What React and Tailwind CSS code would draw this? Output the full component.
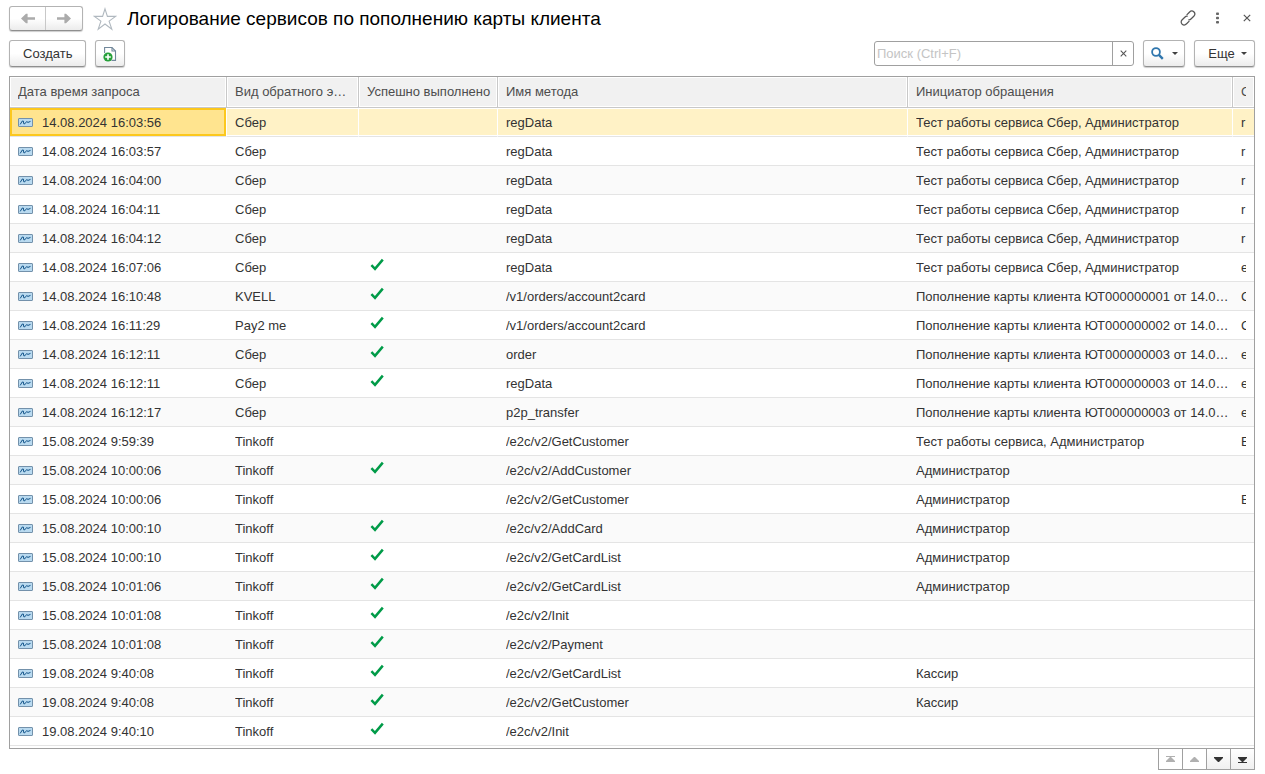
import React, { useState } from 'react';
import clsx from 'clsx';

const TEST_SBER = 'Тест работы сервиса Сбер, Администратор';
const TOPUP_1 = 'Пополнение карты клиента ЮТ000000001 от 14.08.2024';
const TOPUP_2 = 'Пополнение карты клиента ЮТ000000002 от 14.08.2024';
const TOPUP_3 = 'Пополнение карты клиента ЮТ000000003 от 14.08.2024';

const rows = [
  { date: '14.08.2024 16:03:56', kind: 'Сбер', ok: false, method: 'regData', initiator: TEST_SBER, answer: 'r' },
  { date: '14.08.2024 16:03:57', kind: 'Сбер', ok: false, method: 'regData', initiator: TEST_SBER, answer: 'r' },
  { date: '14.08.2024 16:04:00', kind: 'Сбер', ok: false, method: 'regData', initiator: TEST_SBER, answer: 'r' },
  { date: '14.08.2024 16:04:11', kind: 'Сбер', ok: false, method: 'regData', initiator: TEST_SBER, answer: 'r' },
  { date: '14.08.2024 16:04:12', kind: 'Сбер', ok: false, method: 'regData', initiator: TEST_SBER, answer: 'r' },
  { date: '14.08.2024 16:07:06', kind: 'Сбер', ok: true, method: 'regData', initiator: TEST_SBER, answer: 'e' },
  { date: '14.08.2024 16:10:48', kind: 'KVELL', ok: true, method: '/v1/orders/account2card', initiator: TOPUP_1, answer: 'C' },
  { date: '14.08.2024 16:11:29', kind: 'Pay2 me', ok: true, method: '/v1/orders/account2card', initiator: TOPUP_2, answer: 'C' },
  { date: '14.08.2024 16:12:11', kind: 'Сбер', ok: true, method: 'order', initiator: TOPUP_3, answer: 'e' },
  { date: '14.08.2024 16:12:11', kind: 'Сбер', ok: true, method: 'regData', initiator: TOPUP_3, answer: 'e' },
  { date: '14.08.2024 16:12:17', kind: 'Сбер', ok: false, method: 'p2p_transfer', initiator: TOPUP_3, answer: 'e' },
  { date: '15.08.2024 9:59:39', kind: 'Tinkoff', ok: false, method: '/e2c/v2/GetCustomer', initiator: 'Тест работы сервиса, Администратор', answer: 'E' },
  { date: '15.08.2024 10:00:06', kind: 'Tinkoff', ok: true, method: '/e2c/v2/AddCustomer', initiator: 'Администратор', answer: '' },
  { date: '15.08.2024 10:00:06', kind: 'Tinkoff', ok: false, method: '/e2c/v2/GetCustomer', initiator: 'Администратор', answer: 'E' },
  { date: '15.08.2024 10:00:10', kind: 'Tinkoff', ok: true, method: '/e2c/v2/AddCard', initiator: 'Администратор', answer: '' },
  { date: '15.08.2024 10:00:10', kind: 'Tinkoff', ok: true, method: '/e2c/v2/GetCardList', initiator: 'Администратор', answer: '' },
  { date: '15.08.2024 10:01:06', kind: 'Tinkoff', ok: true, method: '/e2c/v2/GetCardList', initiator: 'Администратор', answer: '' },
  { date: '15.08.2024 10:01:08', kind: 'Tinkoff', ok: true, method: '/e2c/v2/Init', initiator: '', answer: '' },
  { date: '15.08.2024 10:01:08', kind: 'Tinkoff', ok: true, method: '/e2c/v2/Payment', initiator: '', answer: '' },
  { date: '19.08.2024 9:40:08', kind: 'Tinkoff', ok: true, method: '/e2c/v2/GetCardList', initiator: 'Кассир', answer: '' },
  { date: '19.08.2024 9:40:08', kind: 'Tinkoff', ok: true, method: '/e2c/v2/GetCustomer', initiator: 'Кассир', answer: '' },
  { date: '19.08.2024 9:40:10', kind: 'Tinkoff', ok: true, method: '/e2c/v2/Init', initiator: '', answer: '' },
];

const columns = [
  { title: 'Дата время запроса', size: 'w-[217px] pr-2' },
  { title: 'Вид обратного эквайринга', size: 'w-[132px] pr-2' },
  { title: 'Успешно выполнено', size: 'w-[139px] pr-1' },
  { title: 'Имя метода', size: 'pr-2' },
  { title: 'Инициатор обращения', size: 'w-[325px] pr-2' },
  { title: 'С', size: 'w-[21px] pr-2', clip: true },
];

const raised =
  'flex items-center justify-center rounded-[3px] border border-[#b3b3b3] border-b-[#8f8f8f] bg-linear-to-b from-white from-50% to-[#ececec] shadow-[0_1px_1px_rgba(0,0,0,0.2)]';

const ArrowIcon = ({ flip }) => (
  <svg width="14" height="11" viewBox="0 0 14 11" className={clsx(flip && 'rotate-180')} aria-hidden="true">
    <path d="M0 5.5 L5 0.8 H6.6 V4.2 H14 V6.8 H6.6 V10.2 H5 Z" fill="#ababab" />
  </svg>
);

const StarIcon = () => (
  <svg width="24" height="24" viewBox="0 0 24 24" aria-hidden="true">
    <path
      d="M12 1.8 L14.4 9.4 H22.6 L16.1 14.1 L18.8 22.2 L12 17 L5.2 22.2 L7.9 14.1 L1.4 9.4 H9.6 Z"
      fill="#fff"
      stroke="#b0b8bf"
      strokeWidth="1.1"
    />
  </svg>
);

const CopyDocIcon = () => (
  <svg width="14" height="16" viewBox="0 0 14 16" aria-hidden="true">
    <path d="M1.6 7 V1.5 H9 L12.5 5 V14.4 H8.5" fill="#fff" stroke="#71879a" strokeWidth="1.1" />
    <path d="M9 1.5 V5 H12.5" fill="none" stroke="#71879a" strokeWidth="1.1" />
    <circle cx="5" cy="11" r="4.6" fill="#26a03a" />
    <path d="M5 8.2 V13.8 M2.2 11 H7.8" stroke="#fff" strokeWidth="1.6" />
  </svg>
);

const LinkIcon = () => (
  <svg width="16" height="16" viewBox="0 0 16 16" fill="none" stroke="#555" strokeWidth="1.25" strokeLinecap="round" aria-hidden="true">
    <path d="M7 4.6 L9.4 2.2 C10.8 0.8 12.4 0.6 13.8 1.8 C15.2 3.2 15.2 4.8 13.8 6.2 L11.2 8.8 C10.4 9.6 9.6 9.9 8.8 9.8" />
    <path d="M9 11.4 L6.6 13.8 C5.2 15.2 3.6 15.4 2.2 14.2 C0.8 12.8 0.8 11.2 2.2 9.8 L4.8 7.2 C5.6 6.4 6.4 6.1 7.2 6.2" />
  </svg>
);

const DotsIcon = () => (
  <svg width="3" height="12" viewBox="0 0 3 12" fill="#666" aria-hidden="true">
    <rect y="0.5" width="3" height="2.6" rx="0.8" />
    <rect y="4.7" width="3" height="2.6" rx="0.8" />
    <rect y="8.9" width="3" height="2.6" rx="0.8" />
  </svg>
);

const CrossIcon = ({ size = 8 }) => (
  <svg width={size} height={size} viewBox="0 0 8 8" aria-hidden="true">
    <path d="M0.8 0.8 L7.2 7.2 M7.2 0.8 L0.8 7.2" stroke="#555" strokeWidth="1.2" />
  </svg>
);

const SearchIcon = () => (
  <svg width="13" height="13" viewBox="0 0 13 13" fill="none" stroke="#2f76ad" aria-hidden="true">
    <circle cx="5" cy="5" r="3.9" strokeWidth="1.8" />
    <path d="M7.9 7.9 L11.8 11.8" strokeWidth="2.4" />
  </svg>
);

const CaretIcon = () => (
  <svg width="6" height="3" viewBox="0 0 6 3" aria-hidden="true">
    <path d="M0 0 H6 L3 3 Z" fill="#404040" />
  </svg>
);

const RecordIcon = () => (
  <svg width="15" height="9" viewBox="0 0 15 9" className="shrink-0" aria-hidden="true">
    <rect x="0.5" y="0.5" width="14" height="8" rx="0.5" fill="#b9daf0" stroke="#7391ab" />
    <path d="M2.2 6.4 L4.3 3 L5.3 3 L5.8 5.8 L6.8 5.8 L8.6 3.6 L10 4.4 L12.5 3.4" fill="none" stroke="#12548a" strokeWidth="1" />
  </svg>
);

const CheckIcon = () => (
  <svg width="14" height="13" viewBox="0 0 14 13" aria-hidden="true">
    <path d="M1.4 7.2 L5 10.8 L12.8 1.6" fill="none" stroke="#009b48" strokeWidth="2.5" />
  </svg>
);

const ScrollIcon = ({ down, edge }) => (
  <svg width="9" height="7" viewBox="0 0 9 7" fill="currentColor" className={clsx(down && 'rotate-180')} aria-hidden="true">
    {edge && <rect width="9" height="1" />}
    <path d="M4 1 H5 L9 5 V6 H0 V5 Z" />
  </svg>
);

const pager = [
  { label: 'В начало', edge: true, down: false, disabled: true },
  { label: 'Вверх', edge: false, down: false, disabled: true },
  { label: 'Вниз', edge: false, down: true, disabled: false },
  { label: 'В конец', edge: true, down: true, disabled: false },
];

const LogTable = () => {
  const [selected, setSelected] = useState(0);

  return (
    <div className="border border-[#a0a0a0] pb-0.5">
      <table className="w-full table-fixed border-separate border-spacing-0">
        <thead>
          <tr>
            {columns.map((col) => (
              <th
                key={col.title}
                className={clsx(
                  'h-[31px] border-r border-b border-[#c8c8c8] bg-[#f1f1f1] pl-2 text-left font-normal text-[#4d4d4d] shadow-[inset_0_0_0_1px_#fff] last:border-r-0',
                  col.size
                )}
              >
                <div className={col.clip ? 'overflow-hidden whitespace-nowrap' : 'truncate'}>{col.title}</div>
              </th>
            ))}
          </tr>
        </thead>
        <tbody>
          {rows.map((row, i) => {
            const active = i === selected;
            const base = 'h-[29px] border-b border-[#e4e4e4] pt-0.5 pl-2 pr-1';
            const stripe = i % 2 === 0 && 'bg-[#fafafa]';
            const cell = clsx(
              base,
              active
                ? 'border-r border-r-white bg-[#fff2c6] shadow-[inset_0_1px_0_#fff,inset_0_-1px_0_#fff] last:border-r-0'
                : stripe
            );
            const first = clsx(
              base,
              active ? 'border-r border-r-white bg-[#ffe48f] shadow-[inset_0_0_0_2px_#fcc81e]' : stripe
            );
            return (
              <tr key={i} onClick={() => setSelected(i)}>
                <td className={first}>
                  <div className="flex items-center gap-[9px] whitespace-nowrap">
                    <span className="pb-0.5">
                      <RecordIcon />
                    </span>
                    {row.date}
                  </div>
                </td>
                <td className={cell}>
                  <div className="truncate">{row.kind}</div>
                </td>
                <td className={cell}>
                  {row.ok && (
                    <div className="flex pb-2 pl-[3px]">
                      <CheckIcon />
                    </div>
                  )}
                </td>
                <td className={cell}>
                  <div className="truncate">{row.method}</div>
                </td>
                <td className={cell}>
                  <div className="truncate">{row.initiator}</div>
                </td>
                <td className={cell}>
                  <div className="mr-1 overflow-hidden">{row.answer}</div>
                </td>
              </tr>
            );
          })}
        </tbody>
      </table>
    </div>
  );
};

const App = () => {
  const [query, setQuery] = useState('');

  return (
    <main className="bg-white pt-1.5 pr-2.5 pl-[9px] font-['Liberation_Sans',Arial,sans-serif] text-[13px] leading-4 text-[#333]">
      <header className="flex h-[25px] items-center">
        <div className={clsx(raised, 'h-[25px]')}>
          <button type="button" aria-label="Назад" className="flex h-full w-9 items-center justify-center border-r border-[#c8c8c8]">
            <ArrowIcon />
          </button>
          <button type="button" aria-label="Вперед" className="flex h-full w-9 items-center justify-center">
            <ArrowIcon flip />
          </button>
        </div>
        <button type="button" aria-label="Избранное" className="ml-2.5">
          <StarIcon />
        </button>
        <h1 className="ml-2.5 flex-1 truncate text-[19px] leading-6 text-black">Логирование сервисов по пополнению карты клиента</h1>
        <div className="flex items-center pr-1 pb-0.5">
          <button type="button" aria-label="Получить ссылку">
            <LinkIcon />
          </button>
          <button type="button" aria-label="Меню" className="ml-5">
            <DotsIcon />
          </button>
          <button type="button" aria-label="Закрыть" className="ml-6">
            <CrossIcon />
          </button>
        </div>
      </header>

      <div className="mt-[9px] flex h-[27px] items-center">
        <button type="button" className={clsx(raised, 'h-[27px] px-[13px]')}>
          Создать
        </button>
        <button type="button" aria-label="Создать копированием" className={clsx(raised, 'ml-[9px] h-[27px] w-[30px]')}>
          <CopyDocIcon />
        </button>
        <div className="ml-auto flex h-[25px] w-[260px] rounded-[3px] border border-[#a0a0a0] bg-white">
          <input
            type="text"
            aria-label="Поиск"
            placeholder="Поиск (Ctrl+F)"
            value={query}
            onChange={(e) => setQuery(e.target.value)}
            className="min-w-0 flex-1 px-0.5 outline-none placeholder:text-[#c4c4c4]"
          />
          <button
            type="button"
            aria-label="Очистить"
            onClick={() => setQuery('')}
            className="flex w-[21px] items-center justify-center border-l border-[#a0a0a0]"
          >
            <CrossIcon size={7} />
          </button>
        </div>
        <button type="button" aria-label="Найти" className={clsx(raised, 'ml-[9px] h-[27px] w-[42px] gap-2')}>
          <SearchIcon />
          <CaretIcon />
        </button>
        <button type="button" className={clsx(raised, 'ml-[9px] h-[27px] w-[61px] gap-1.5 pl-1.5')}>
          Еще
          <CaretIcon />
        </button>
      </div>

      <div className="mt-[9px]">
        <LogTable />
        <div className="-mt-px flex justify-end">
          <div className="flex divide-x divide-[#a0a0a0] border border-[#a0a0a0]">
            {pager.map((btn) => (
              <button
                key={btn.label}
                type="button"
                aria-label={btn.label}
                disabled={btn.disabled}
                className={clsx(
                  'flex h-5 w-6 items-center justify-center last:w-[23px]',
                  btn.disabled ? 'bg-white text-[#b0b0b0]' : 'bg-linear-to-b from-white to-[#f0f0f0] text-[#333]'
                )}
              >
                <ScrollIcon down={btn.down} edge={btn.edge} />
              </button>
            ))}
          </div>
        </div>
      </div>
    </main>
  );
};

export default App;
